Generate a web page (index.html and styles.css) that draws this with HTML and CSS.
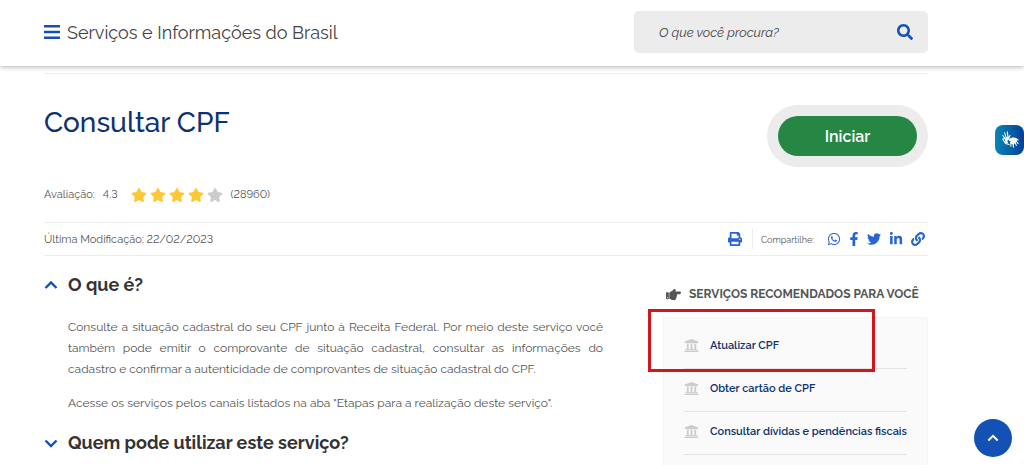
FILE: index.html
```
<!DOCTYPE html>
<html lang="pt-BR">
<head>
    <meta charset="UTF-8">
    <meta name="viewport" content="width=device-width, initial-scale=1.0">
    <title>Consultar CPF</title>
    <link rel="stylesheet" href="styles.css">
</head>
<body>
    <svg class="sprite" aria-hidden="true">
        <symbol id="star" viewBox="0 0 576 512"><path d="M259.3 17.8L194 150.2 47.9 171.5c-26.2 3.8-36.7 36.1-17.7 54.6l105.7 103-25 145.5c-4.5 26.3 23.2 46 46.4 33.7L288 439.6l130.7 68.7c23.2 12.2 50.9-7.4 46.4-33.7l-25-145.5 105.7-103c19-18.5 8.5-50.8-17.7-54.6L382 150.2 316.7 17.8c-11.7-23.6-45.6-23.9-57.4 0z"/></symbol>
        <symbol id="university" viewBox="0 0 512 512"><path d="M496 128v16a8 8 0 0 1-8 8h-24v12c0 6.627-5.373 12-12 12H60c-6.627 0-12-5.373-12-12v-12H24a8 8 0 0 1-8-8v-16a8 8 0 0 1 4.941-7.392l232-88a7.996 7.996 0 0 1 6.118 0l232 88A8 8 0 0 1 496 128zm-24 304H40c-13.255 0-24 10.745-24 24v16a8 8 0 0 0 8 8h464a8 8 0 0 0 8-8v-16c0-13.255-10.745-24-24-24zM96 192v192H60c-6.627 0-12 5.373-12 12v20h416v-20c0-6.627-5.373-12-12-12h-36V192h-64v192h-64V192h-64v192h-64V192H96z"/></symbol>
        <symbol id="chevron-up" viewBox="0 0 14 14"><path d="M1.500 10 7 4.500 12.500 10" fill="none" stroke="currentColor" stroke-width="2.400"/></symbol>
        <symbol id="chevron-down" viewBox="0 0 14 14"><path d="M1.500 4.500 7 10 12.500 4.500" fill="none" stroke="currentColor" stroke-width="2.400"/></symbol>
    </svg>

    <header class="site-header">
        <button class="menu-btn" type="button" aria-label="Menu">
            <svg class="icon-menu" viewBox="0 0 16 14"><path d="M0 0h16v2.400H0zM0 5.800h16v2.400H0zM0 11.600h16V14H0z"/></svg>
        </button>
        <a class="site-name" href="#">Serviços e Informações do Brasil</a>
        <form class="search">
            <input class="search-input" type="text" placeholder="O que você procura?" aria-label="O que você procura?">
            <button class="search-btn" type="submit" aria-label="Buscar">
                <svg class="icon-search" viewBox="0 0 512 512"><path d="M505 442.7L405.3 343c-4.500-4.500-10.600-7-17-7H372c27.600-35.300 44-79.700 44-128C416 93.100 322.900 0 208 0S0 93.100 0 208s93.100 208 208 208c48.300 0 92.700-16.400 128-44v16.300c0 6.400 2.500 12.500 7 17l99.700 99.700c9.400 9.400 24.600 9.400 33.900 0l28.300-28.300c9.400-9.400 9.400-24.600.1-34zM208 336c-70.700 0-128-57.200-128-128 0-70.700 57.200-128 128-128 70.700 0 128 57.200 128 128 0 70.700-57.200 128-128 128z"/></svg>
            </button>
        </form>
    </header>

    <main class="page">
        <div class="title-row">
            <h1 class="title">Consultar CPF</h1>
            <div class="start-wrap">
                <button class="start-btn" type="button">Iniciar</button>
            </div>
        </div>

        <div class="rating">
            <span>Avaliação:</span>
            <span>4.3</span>
            <span class="stars">
                <svg class="star"><use href="#star"/></svg>
                <svg class="star"><use href="#star"/></svg>
                <svg class="star"><use href="#star"/></svg>
                <svg class="star"><use href="#star"/></svg>
                <svg class="star star-off"><use href="#star"/></svg>
            </span>
            <span>(28960)</span>
        </div>

        <div class="meta">
            <span>Última Modificação: 22/02/2023</span>
            <div class="share">
                <a class="print" href="#" aria-label="Imprimir"><svg class="icon" viewBox="0 0 512 512"><path d="M448 192V77.25c0-8.49-3.37-16.62-9.37-22.63L393.37 9.37c-6-6-14.14-9.37-22.63-9.37H96C78.33 0 64 14.33 64 32v160c-35.35 0-64 28.65-64 64v112c0 8.84 7.16 16 16 16h48v96c0 17.67 14.33 32 32 32h320c17.67 0 32-14.33 32-32v-96h48c8.84 0 16-7.16 16-16V256c0-35.35-28.65-64-64-64zm-64 256H128v-96h256v96zm0-224H128V64h192v48c0 8.84 7.16 16 16 16h48v96zm48 72c-13.25 0-24-10.75-24-24 0-13.26 10.75-24 24-24s24 10.74 24 24c0 13.25-10.75 24-24 24z"/></svg></a>
                <span class="share-label">Compartilhe:</span>
                <a href="#" aria-label="WhatsApp"><svg class="icon" viewBox="0 0 448 512"><path d="M380.9 97.1C339 55.1 283.2 32 223.9 32c-122.4 0-222 99.6-222 222 0 39.1 10.2 77.3 29.6 111L0 480l117.7-30.9c32.4 17.7 68.9 27 106.1 27h.1c122.3 0 224.1-99.6 224.1-222 0-59.3-25.2-115-67.1-157zm-157 341.6c-33.2 0-65.7-8.9-94-25.7l-6.7-4-69.8 18.3L72 359.2l-4.4-7c-18.5-29.4-28.2-63.3-28.2-98.2 0-101.7 82.8-184.5 184.6-184.5 49.3 0 95.6 19.2 130.4 54.1 34.8 34.9 56.2 81.2 56.1 130.5 0 101.8-84.9 184.6-186.6 184.6zm101.2-138.2c-5.5-2.8-32.8-16.2-37.9-18-5.1-1.9-8.8-2.8-12.5 2.8-3.7 5.6-14.3 18-17.6 21.8-3.2 3.7-6.5 4.2-12 1.4-32.6-16.3-54-29.1-75.5-66-5.7-9.8 5.7-9.1 16.3-30.3 1.8-3.7.9-6.9-.5-9.7-1.4-2.8-12.5-30.1-17.1-41.2-4.5-10.8-9.1-9.3-12.5-9.5-3.2-.2-6.9-.2-10.6-.2-3.7 0-9.7 1.4-14.8 6.9-5.1 5.6-19.4 19-19.4 46.3 0 27.3 19.9 53.7 22.6 57.4 2.8 3.7 39.1 59.7 94.8 83.8 35.2 15.2 49 16.5 66.6 13.9 10.7-1.6 32.8-13.4 37.4-26.4 4.6-13 4.6-24.1 3.2-26.4-1.3-2.5-5-3.9-10.5-6.6z"/></svg></a>
                <a href="#" aria-label="Facebook"><svg class="icon icon-narrow" viewBox="0 0 320 512"><path d="M279.14 288l14.22-92.66h-88.91v-60.13c0-25.35 12.42-50.06 52.24-50.06h40.42V6.26S260.43 0 225.36 0c-73.22 0-121.08 44.38-121.08 124.72v70.62H22.89V288h81.39v224h100.17V288z"/></svg></a>
                <a href="#" aria-label="Twitter"><svg class="icon" viewBox="0 0 512 512"><path d="M459.37 151.716c.325 4.548.325 9.097.325 13.645 0 138.72-105.583 298.558-298.558 298.558-59.452 0-114.68-17.219-161.137-47.106 8.447.974 16.568 1.299 25.34 1.299 49.055 0 94.213-16.568 130.274-44.832-46.132-.975-84.792-31.188-98.112-72.772 6.498.974 12.995 1.624 19.818 1.624 9.421 0 18.843-1.3 27.614-3.573-48.081-9.747-84.143-51.98-84.143-102.985v-1.299c13.969 7.797 30.214 12.67 47.431 13.319-28.264-18.843-46.781-51.005-46.781-87.391 0-19.492 5.197-37.36 14.294-52.954 51.655 63.675 129.3 105.258 216.365 109.807-1.624-7.797-2.599-15.918-2.599-24.04 0-57.828 46.782-104.934 104.934-104.934 30.213 0 57.502 12.67 76.67 33.137 23.715-4.548 46.456-13.32 66.599-25.34-7.798 24.366-24.366 44.833-46.132 57.827 21.117-2.273 41.584-8.122 60.426-16.243-14.292 20.791-32.161 39.308-52.628 54.253z"/></svg></a>
                <a href="#" aria-label="LinkedIn"><svg class="icon" viewBox="0 0 448 512"><path d="M100.28 448H7.4V148.9h92.88zM53.79 108.1C24.09 108.1 0 83.5 0 53.8a53.79 53.79 0 0 1 107.58 0c0 29.7-24.1 54.3-53.79 54.3zM447.9 448h-92.68V302.4c0-34.7-.7-79.2-48.29-79.2-48.29 0-55.69 37.7-55.69 76.7V448h-92.78V148.9h89.08v40.8h1.3c12.4-23.5 42.69-48.3 87.88-48.3 94 0 111.28 61.9 111.28 142.3V448z"/></svg></a>
                <a href="#" aria-label="Copiar link"><svg class="icon" viewBox="0 0 512 512"><path d="M326.612 185.391c59.747 59.809 58.927 155.698.36 214.59-.11.12-.24.25-.36.37l-67.2 67.2c-59.27 59.27-155.699 59.262-214.96 0-59.27-59.26-59.27-155.7 0-214.96l37.106-37.106c9.84-9.84 26.786-3.3 27.294 10.606.648 17.722 3.826 35.527 9.69 52.721 1.986 5.822.567 12.262-3.783 16.612l-13.087 13.087c-28.026 28.026-28.905 73.66-1.155 101.96 28.024 28.579 74.086 28.749 102.325.51l67.2-67.19c28.191-28.191 28.073-73.757 0-101.83-3.701-3.694-7.429-6.564-10.341-8.569a16.037 16.037 0 0 1-6.947-12.606c-.396-10.567 3.348-21.456 11.698-29.806l21.054-21.055c5.521-5.521 14.182-6.199 20.584-1.731a152.482 152.482 0 0 1 20.522 17.197zM467.547 44.449c-59.261-59.262-155.69-59.27-214.96 0l-67.2 67.2c-.12.12-.25.25-.36.37-58.566 58.892-59.387 154.781.36 214.59a152.454 152.454 0 0 0 20.521 17.196c6.402 4.468 15.064 3.789 20.584-1.731l21.054-21.055c8.35-8.35 12.094-19.239 11.698-29.806a16.037 16.037 0 0 0-6.947-12.606c-2.912-2.005-6.64-4.875-10.341-8.569-28.073-28.073-28.191-73.639 0-101.83l67.2-67.19c28.239-28.239 74.3-28.069 102.325.51 27.75 28.3 26.872 73.934-1.155 101.96l-13.087 13.087c-4.35 4.35-5.769 10.79-3.783 16.612 5.864 17.194 9.042 34.999 9.69 52.721.509 13.906 17.454 20.446 27.294 10.606l37.106-37.106c59.271-59.259 59.271-155.699.001-214.959z"/></svg></a>
            </div>
        </div>

        <div class="columns">
            <div class="content">
                <section>
                    <h2><button class="toggle" type="button" aria-expanded="true"><svg class="chevron"><use href="#chevron-up"/></svg>O que é?</button></h2>
                    <div class="section-text">
                        <p>Consulte a situação cadastral do seu CPF junto à Receita Federal. Por meio deste serviço você também pode emitir o comprovante de situação cadastral, consultar as informações do cadastro&nbsp;e confirmar a autenticidade de comprovantes de situação cadastral do CPF.</p>
                        <p>Acesse os serviços pelos canais listados na aba "Etapas para a realização deste serviço".</p>
                    </div>
                </section>
                <section>
                    <h2><button class="toggle" type="button" aria-expanded="false"><svg class="chevron"><use href="#chevron-down"/></svg>Quem pode utilizar este serviço?</button></h2>
                </section>
            </div>

            <aside class="recommended">
                <h3 class="recommended-title">
                    <svg class="icon-hand" viewBox="0 0 512 512"><path d="M512 199.652c0 23.625-20.65 43.826-44.8 43.826h-99.851c16.34 17.048 18.346 49.766-6.299 70.944 14.288 22.829 2.147 53.017-16.45 62.315C353.574 425.878 322.654 448 272 448c-2.746 0-13.276-.203-16-.195-61.971.168-76.894-31.065-123.731-38.315C120.596 407.683 112 397.599 112 385.786V214.261l.002-.001c.011-18.366 10.607-35.889 28.464-43.845 28.886-12.994 95.413-49.038 107.534-77.323 7.797-18.194 21.384-29.084 40-29.092 34.222-.014 57.752 35.098 44.119 66.908-3.583 8.359-8.312 16.67-14.153 24.918H467.2c23.45 0 44.8 20.543 44.8 43.826zM96 200v192c0 13.255-10.745 24-24 24H24c-13.255 0-24-10.745-24-24V200c0-13.255 10.745-24 24-24h48c13.255 0 24 10.745 24 24zM68 368c0-11.046-8.954-20-20-20s-20 8.954-20 20 8.954 20 20 20 20-8.954 20-20z"/></svg>
                    SERVIÇOS RECOMENDADOS PARA VOCÊ
                </h3>
                <ul class="services">
                    <li class="service"><svg class="icon-gov"><use href="#university"/></svg><a href="#">Atualizar CPF</a></li>
                    <li class="service"><svg class="icon-gov"><use href="#university"/></svg><a href="#">Obter cartão de CPF</a></li>
                    <li class="service"><svg class="icon-gov"><use href="#university"/></svg><a href="#">Consultar dívidas e pendências fiscais</a></li>
                </ul>
                <div class="highlight"></div>
            </aside>
        </div>
    </main>

    <button class="libras" type="button" aria-label="Conteúdo acessível em Libras">
        <svg class="icon-libras" viewBox="0 0 20 20"><path d="M5 9 2 5M6 8 4 2M8 8 7 1M8 9l2-4M4 8l-2 1 3 5 4 1M10 9l6-1 3 2M11 12v5M13 12l1 6M15 11l2 5M16 10l3 4" fill="none" stroke="#fff" stroke-width="1.200" stroke-linecap="round"/><path d="M4 8l4-2 1 3-2 2 1 3-3-1zM9 9l4-2 4 1 1 3-4 4-4-1 1-3H9z" fill="#fff"/></svg>
    </button>
    <button class="to-top" type="button" aria-label="Voltar ao topo">
        <svg class="icon-top"><use href="#chevron-up"/></svg>
    </button>
</body>
</html>
```
FILE: styles.css
```
:root {
    --blue: #1351b4;
    --blue-dark: #0c326f;
    --icon-blue: #2864d8;
    --text: #555;
    --line: #ededed;
}

* {
    margin: 0;
    padding: 0;
    box-sizing: border-box;
}

body {
    font-family: Raleway, Lato, sans-serif;
    font-size: 14px;
    font-variant-numeric: lining-nums;
    color: var(--text);
    background: #fff;
    min-height: 100vh;
    overflow: hidden;
}

svg {
    display: block;
    flex: none;
    fill: currentColor;
}

a {
    color: inherit;
    text-decoration: none;
}

button {
    font: inherit;
    color: inherit;
    background: none;
    border: none;
    cursor: pointer;
}

.sprite {
    position: absolute;
    width: 0;
    height: 0;
}

.site-header {
    display: flex;
    align-items: center;
    height: 66px;
    padding: 0 96px 2px 44px;
    box-shadow: 0 1px 5px rgba(0, 0, 0, 0.3);
}

.menu-btn,
.search-btn {
    color: var(--blue);
}

.icon-menu {
    width: 16px;
    height: 14px;
}

.site-name {
    margin-left: 7px;
    font-size: 18px;
    color: #444;
}

.search {
    display: flex;
    align-items: center;
    width: 294px;
    height: 42px;
    margin-left: auto;
    padding: 0 15px 0 25px;
    background: #ececec;
    border-radius: 5px;
}

.search-input {
    flex: 1;
    min-width: 0;
    border: none;
    outline: none;
    background: none;
    font: italic 13px Raleway, Lato, sans-serif;
}

.search-input::placeholder {
    color: #444;
}

.icon-search {
    width: 16px;
    height: 16px;
}

.page {
    margin: 7px 96px 0 44px;
    border-top: 1px solid var(--line);
}

.title-row {
    display: flex;
    justify-content: space-between;
    padding-top: 31px;
}

.title {
    font-size: 28px;
    line-height: 36px;
    font-weight: 500;
    color: var(--blue-dark);
}

.start-wrap {
    padding: 11px;
    background: #ececec;
    border-radius: 31px;
}

.start-btn {
    display: block;
    width: 139px;
    height: 40px;
    border-radius: 20px;
    background: #268744;
    color: #fff;
    font-size: 16px;
    font-weight: 600;
}

.rating {
    display: flex;
    align-items: center;
    gap: 8px;
    padding: 19px 0 18px;
    font-size: 11px;
    line-height: 18px;
}

.stars {
    display: flex;
    gap: 3px;
    margin-left: 5px;
}

.star {
    width: 16px;
    height: 14px;
    color: #fdc836;
}

.star-off {
    color: #ccc;
}

.meta {
    display: flex;
    align-items: center;
    justify-content: space-between;
    height: 34px;
    border-top: 1px solid var(--line);
    border-bottom: 1px solid var(--line);
    font-size: 11px;
}

.share {
    display: flex;
    align-items: center;
    gap: 8px;
    padding-right: 3px;
    color: var(--icon-blue);
}

.print {
    padding-right: 2px;
}

.share-label {
    padding: 2px 5px 0 8px;
    border-left: 1px solid var(--line);
    color: var(--text);
    font-size: 9px;
    line-height: 18px;
}

.icon {
    width: 14px;
    height: 14px;
}

.icon-narrow {
    width: 10px;
}

.columns {
    display: flex;
    justify-content: space-between;
    gap: 60px;
}

.content {
    flex: 1;
    padding-top: 17px;
}

.toggle {
    display: flex;
    align-items: center;
    gap: 10px;
    color: #333;
    font-size: 18px;
    line-height: 24px;
    font-weight: 700;
}

.chevron {
    width: 14px;
    height: 14px;
    color: var(--blue);
}

.section-text {
    padding: 20px 0 17px 24px;
    font-size: 12px;
    line-height: 21px;
    text-align: justify;
}

.section-text p + p {
    margin-top: 13px;
}

.recommended {
    position: relative;
    width: 265px;
    padding-top: 28px;
}

.recommended-title {
    display: flex;
    align-items: center;
    gap: 8px;
    padding-left: 3px;
    font-size: 12px;
    line-height: 20px;
    font-weight: 700;
    white-space: nowrap;
}

.icon-hand {
    width: 15px;
    height: 15px;
}

.services {
    list-style: none;
    margin-top: 13px;
    padding: 8px 20px 12px 20px;
    background: #fafafa;
    border: 1px solid #f4f4f4;
}

.service {
    display: flex;
    align-items: center;
    gap: 11px;
    height: 43px;
    padding-bottom: 3px;
    border-bottom: 1px solid #e4e4e4;
    color: var(--blue-dark);
    font-size: 11px;
    font-weight: 600;
}

.icon-gov {
    width: 15px;
    height: 15px;
    color: #ccc;
}

/* red frame drawn over the first service */
.highlight {
    position: absolute;
    top: 53px;
    left: -15px;
    width: 227px;
    height: 63px;
    border: 3px solid #d4151a;
}

.libras {
    position: fixed;
    top: 125px;
    right: 0;
    display: flex;
    align-items: center;
    justify-content: center;
    width: 29px;
    height: 30px;
    border-radius: 8px;
    background: linear-gradient(90deg, #0787b5, #053e96);
}

.icon-libras {
    width: 18px;
    height: 18px;
}

.to-top {
    position: fixed;
    right: 12px;
    bottom: 8px;
    display: flex;
    align-items: center;
    justify-content: center;
    width: 38px;
    height: 38px;
    border-radius: 50%;
    background: var(--blue);
    color: #fff;
}

.icon-top {
    width: 12px;
    height: 12px;
}
```
